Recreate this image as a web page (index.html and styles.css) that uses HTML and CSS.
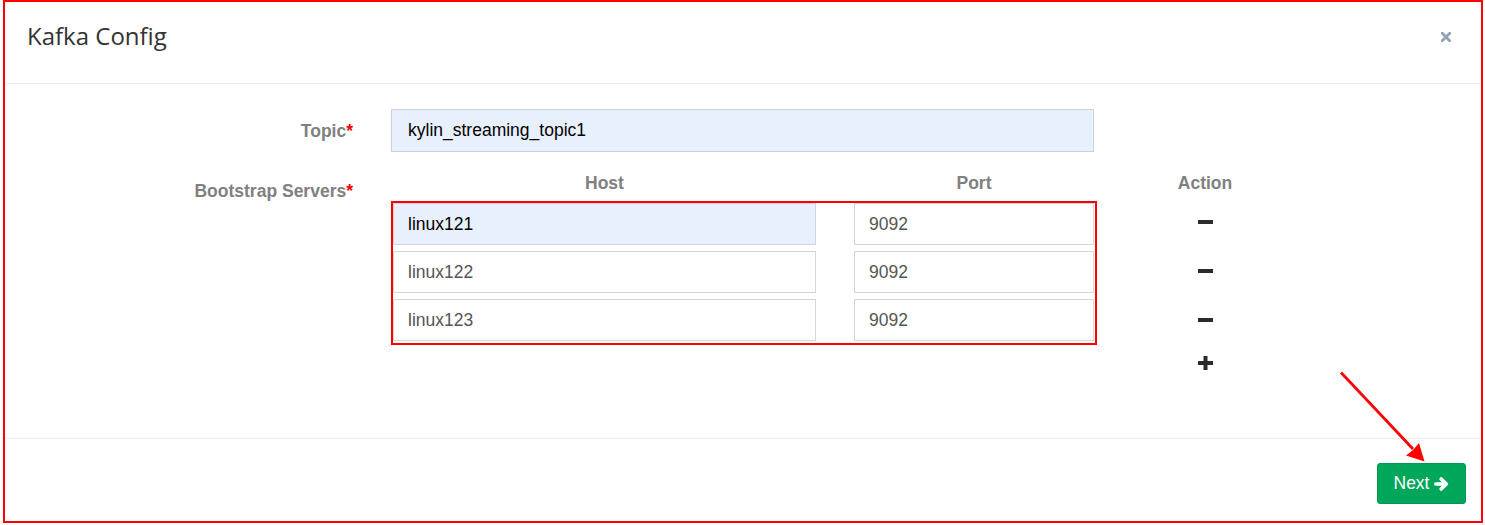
FILE: index.html
```html
<!DOCTYPE html>
<html>
<head>
<meta charset="utf-8">
<link rel="stylesheet" href="styles.css">
</head>
<body>
<div class="modal">
  <div class="modal-header">
    <h4 class="modal-title">Kafka Config</h4>
    <svg class="close" width="10" height="10" viewBox="0 0 10 10"><path d="M1.3 1.3 L8.7 8.7 M8.7 1.3 L1.3 8.7" stroke="#95a1b4" stroke-width="2.8" stroke-linecap="square"/></svg>
  </div>
  <div class="modal-body">
    <div class="form-row topic-row">
      <label class="form-label">Topic<span class="req">*</span></label>
      <div class="input topic-input autofill dark">kylin_streaming_topic1</div>
    </div>
    <div class="form-row servers-row">
      <label class="form-label servers-label">Bootstrap Servers<span class="req">*</span></label>
      <div class="servers">
        <div class="server-head">
          <div class="th th-host">Host</div>
          <div class="th th-port">Port</div>
          <div class="th th-action">Action</div>
        </div>
        <div class="server-body">
          <div class="redbox">
            <div class="input autofill dark">linux121</div>
            <div class="input">9092</div>
            <div class="input">linux122</div>
            <div class="input">9092</div>
            <div class="input">linux123</div>
            <div class="input">9092</div>
          </div>
          <div class="actions">
            <div class="act"><svg width="15" height="4" viewBox="0 0 15 4"><rect width="15" height="4" fill="#2b2b2b"/></svg></div>
            <div class="act"><svg width="15" height="4" viewBox="0 0 15 4"><rect width="15" height="4" fill="#2b2b2b"/></svg></div>
            <div class="act"><svg width="15" height="4" viewBox="0 0 15 4"><rect width="15" height="4" fill="#2b2b2b"/></svg></div>
            <div class="act act-plus"><svg width="15" height="14" viewBox="0 0 15 14"><rect x="0" y="5" width="15" height="4" fill="#2b2b2b"/><rect x="5.5" y="0" width="4" height="14" fill="#2b2b2b"/></svg></div>
          </div>
        </div>
      </div>
    </div>
  </div>
  <div class="modal-footer">
    <button class="btn-next"><span>Next</span><svg width="15" height="14" viewBox="0 0 15 14"><path d="M1.8 7 H12 M7.2 1.9 L12.3 7 L7.2 12.1" fill="none" stroke="#fff" stroke-width="3.6" stroke-linecap="round" stroke-linejoin="round"/></svg></button>
  </div>
  <svg class="annot" width="100" height="105" viewBox="1330 365 100 105">
    <line x1="1341" y1="372.5" x2="1413" y2="449" stroke="#ff0000" stroke-width="2.8"/>
    <polygon points="1424.5,461.5 1406,455.5 1413,450 1419,443" fill="#ff0000"/>
  </svg>
</div>
</body>
</html>
```
FILE: styles.css
```css
* { box-sizing: border-box; }
html, body { margin: 0; padding: 0; background: #fff; }
body { font-family: "Liberation Sans", Arial, sans-serif; }

.modal {
  position: relative;
  margin-left: 3px;
  width: 1480px;
  height: 523px;
  border: 2px solid #ff0000;
  background: #fff;
}

.modal-header {
  height: 82px;
  border-bottom: 1px solid #eeeeee;
  display: flex;
  justify-content: space-between;
  align-items: flex-start;
  padding: 17px 30px 0 22px;
}
.modal-title {
  margin: 0;
  font-family: "Open Sans", "Noto Sans", sans-serif;
  font-weight: 400;
  font-size: 24px;
  line-height: 33px;
  color: #333;
}
.close { margin-top: 13px; display: block; }

.modal-body {
  height: 354px;
  padding-top: 25px;
}

.form-row { display: flex; }
.topic-row { align-items: center; }
.servers-row { margin-top: 21px; align-items: flex-start; }

.form-label {
  width: 348px;
  margin-right: 38px;
  text-align: right;
  font-weight: 700;
  font-size: 17.5px;
  line-height: 20px;
  color: #808080;
}
.servers-label { padding-top: 8px; }
.req { color: #ff0000; }

.input {
  height: 42px;
  border: 1px solid #d2d6de;
  background: #fff;
  color: #555;
  font-size: 17.5px;
  line-height: 40px;
  padding-left: 14px;
  white-space: nowrap;
}
.input.autofill { background: #e8f0fe; }
.input.dark { color: #000; }
.topic-input {
  width: 703px;
  height: 43px;
  line-height: 41px;
  padding-left: 16px;
  border-color: #cbd2dc;
}

.servers { display: flex; flex-direction: column; }
.server-head {
  display: flex;
  padding-left: 2px;
  padding-bottom: 8px;
}
.th {
  font-weight: 700;
  font-size: 17.5px;
  line-height: 20px;
  color: #808080;
  text-align: center;
}
.th-host { width: 423px; }
.th-port { width: 240px; margin-left: 38px; }
.th-action { width: 216px; margin-left: 3px; }

.server-body { display: flex; align-items: flex-start; }
.redbox {
  width: 706px;
  border: 2px solid #ff0000;
  padding-bottom: 2px;
  display: grid;
  grid-template-columns: 423px 240px;
  column-gap: 38px;
  row-gap: 6px;
}

.actions {
  width: 216px;
  display: flex;
  flex-direction: column;
  align-items: center;
  margin-top: -4px;
}
.act {
  height: 49px;
  display: flex;
  align-items: center;
  justify-content: center;
}
.act svg { display: block; }
.act-plus { height: 37px; }

.modal-footer {
  border-top: 1px solid #eeeeee;
  display: flex;
  justify-content: flex-end;
  padding: 24px 15px 0 0;
}
.btn-next {
  width: 89px;
  height: 41px;
  border: 1px solid #00994f;
  border-radius: 3px;
  background: #00a65a;
  color: #fff;
  font-family: "Liberation Sans", Arial, sans-serif;
  font-size: 17.5px;
  display: flex;
  align-items: center;
  justify-content: center;
  gap: 5px;
  padding: 0;
}
.btn-next svg { display: block; margin-top: 1px; }

.annot {
  position: absolute;
  left: 1325px;
  top: 363px;
}
```
